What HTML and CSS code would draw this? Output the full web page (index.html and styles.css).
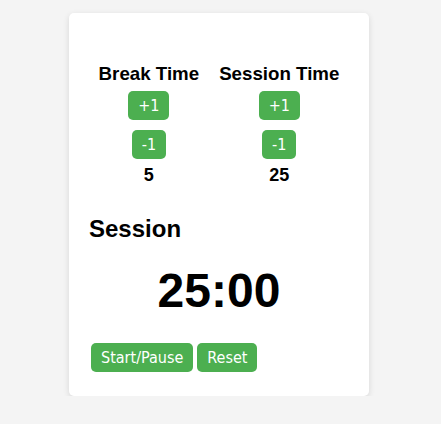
FILE: index.html
```html
<!DOCTYPE html>
<html>
<head>
<meta charset="utf-8">
<link rel="stylesheet" href="styles.css">
</head>
<body>
<div class="card">
  <div class="lengths">
    <div class="col">
      <h3 class="label">Break Time</h3>
      <button class="btn btn-step">+1</button>
      <button class="btn btn-step">-1</button>
      <div class="value">5</div>
    </div>
    <div class="col">
      <h3 class="label">Session Time</h3>
      <button class="btn btn-step">+1</button>
      <button class="btn btn-step">-1</button>
      <div class="value">25</div>
    </div>
  </div>
  <h2 class="mode">Session</h2>
  <div class="timer">25:00</div>
  <div class="controls">
    <button class="btn btn-ctrl">Start/Pause</button>
    <button class="btn btn-ctrl">Reset</button>
  </div>
</div>
</body>
</html>
```
FILE: styles.css
```css
html, body {
  margin: 0;
  padding: 0;
  background: #f4f4f4;
}
body {
  padding-right: 3px;
  font-family: "Liberation Sans", Arial, sans-serif;
  color: #000;
}
.card {
  width: 300px;
  box-sizing: border-box;
  margin: 13px auto 0;
  padding: 50px 20px 24px;
  background: #fff;
  border-radius: 5px;
  box-shadow: 0 2px 6px rgba(0, 0, 0, 0.12);
}
.lengths {
  display: flex;
  justify-content: center;
  gap: 20px;
}
.col {
  display: flex;
  flex-direction: column;
  align-items: center;
}
.label {
  margin: 0 0 7px;
  font-size: 18.72px;
  line-height: 21px;
  font-weight: bold;
}
.btn {
  font-family: "DejaVu Sans Condensed", "DejaVu Sans", sans-serif;
  font-size: 16px;
  line-height: 19px;
  padding: 5px 10px;
  border: none;
  border-radius: 5px;
  background: #4caf50;
  color: #fff;
}
.btn-step + .btn-step {
  margin-top: 10px;
}
.value {
  margin-top: 6px;
  font-size: 18px;
  line-height: 21px;
  font-weight: bold;
}
.mode {
  margin: 29px 0 0;
  font-size: 24px;
  line-height: 28px;
  font-weight: bold;
}
.timer {
  margin-top: 20px;
  text-align: center;
  font-size: 48px;
  line-height: 55px;
  font-weight: bold;
}
.controls {
  display: flex;
  gap: 4px;
  margin-top: 25px;
  padding-left: 2px;
}
```
